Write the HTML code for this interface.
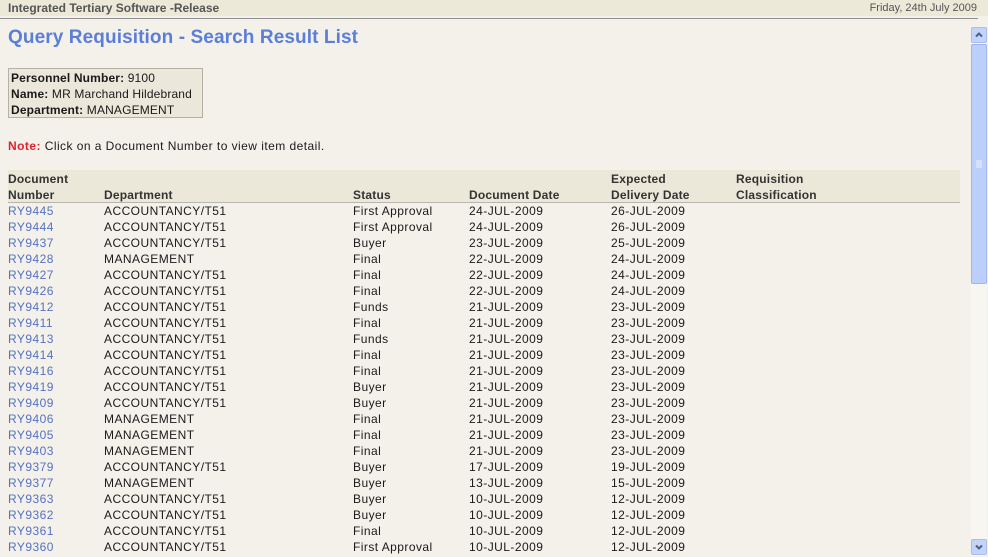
<!DOCTYPE html>
<html><head><meta charset="utf-8"><style>
html,body{margin:0;padding:0;}
body{width:988px;height:557px;background:#f3f1ea;font-family:"Liberation Sans",Arial,sans-serif;font-size:12px;color:#1a1a1a;position:relative;overflow:hidden;letter-spacing:0.45px;}
.hdr{position:absolute;left:0;top:0;width:988px;height:16px;background:#ece9d8;letter-spacing:0;}
.hdr .l{position:absolute;left:8px;top:1px;font-weight:bold;font-size:12px;color:#555;}
.hdr .r{position:absolute;right:11px;top:2px;font-size:11px;color:#555;}
.line{position:absolute;left:0;top:18px;width:978px;height:1px;background:#8f8f8f;}
h1{position:absolute;left:8px;top:27px;margin:0;font-size:19px;font-weight:bold;color:#5b7ed8;letter-spacing:0.1px;}
.info{position:absolute;left:8px;top:68px;width:195px;height:50px;background:#ebe7da;border:1px solid #b4b0a4;box-sizing:border-box;padding:1px 2px;line-height:16px;font-size:12px;white-space:nowrap;letter-spacing:0.15px;}
.note{position:absolute;left:8px;top:139px;font-size:12px;}
.note b{color:#e0202a;}
.th{position:absolute;left:8px;top:170px;width:952px;height:32px;background:#ebe7d9;border-bottom:1px solid #b9b6ad;}
.c{position:absolute;white-space:nowrap;line-height:16px;}
.h{font-weight:bold;color:#333;letter-spacing:0.2px;}
a{color:#5572c3;text-decoration:none;}
.sb{position:absolute;left:971px;top:27px;width:16px;height:529px;background:#f7f6f1;}
.btn{position:absolute;left:971px;width:16px;height:16px;background:#c3d3fb;border:1px solid #a9bdee;box-sizing:border-box;border-radius:2px;}
.thumb{position:absolute;left:971px;top:44px;width:16px;height:240px;background:#bccefa;border:1px solid #9fb5ec;box-sizing:border-box;border-radius:2px;}
</style></head><body>
<div class="hdr"><span class="l">Integrated Tertiary Software -Release</span><span class="r">Friday, 24th July 2009</span></div>
<div class="line"></div>
<h1>Query Requisition - Search Result List</h1>
<div class="info"><b>Personnel Number:</b> 9100<br><b>Name:</b> MR Marchand Hildebrand<br><b>Department:</b> MANAGEMENT</div>
<div class="note"><b>Note:</b> Click on a Document Number to view item detail.</div>
<div class="th"></div>
<div class="c h" style="left:8px;top:171px">Document<br>Number</div>
<div class="c h" style="left:104px;top:187px">Department</div>
<div class="c h" style="left:353px;top:187px">Status</div>
<div class="c h" style="left:469px;top:187px">Document Date</div>
<div class="c h" style="left:611px;top:171px">Expected<br>Delivery Date</div>
<div class="c h" style="left:736px;top:171px">Requisition<br>Classification</div>
<div class="c" style="left:8px;top:203px;"><a>RY9445</a><br><a>RY9444</a><br><a>RY9437</a><br><a>RY9428</a><br><a>RY9427</a><br><a>RY9426</a><br><a>RY9412</a><br><a>RY9411</a><br><a>RY9413</a><br><a>RY9414</a><br><a>RY9416</a><br><a>RY9419</a><br><a>RY9409</a><br><a>RY9406</a><br><a>RY9405</a><br><a>RY9403</a><br><a>RY9379</a><br><a>RY9377</a><br><a>RY9363</a><br><a>RY9362</a><br><a>RY9361</a><br><a>RY9360</a></div>
<div class="c" style="left:104px;top:203px;">ACCOUNTANCY/T51<br>ACCOUNTANCY/T51<br>ACCOUNTANCY/T51<br>MANAGEMENT<br>ACCOUNTANCY/T51<br>ACCOUNTANCY/T51<br>ACCOUNTANCY/T51<br>ACCOUNTANCY/T51<br>ACCOUNTANCY/T51<br>ACCOUNTANCY/T51<br>ACCOUNTANCY/T51<br>ACCOUNTANCY/T51<br>ACCOUNTANCY/T51<br>MANAGEMENT<br>MANAGEMENT<br>MANAGEMENT<br>ACCOUNTANCY/T51<br>MANAGEMENT<br>ACCOUNTANCY/T51<br>ACCOUNTANCY/T51<br>ACCOUNTANCY/T51<br>ACCOUNTANCY/T51</div>
<div class="c" style="left:353px;top:203px;">First Approval<br>First Approval<br>Buyer<br>Final<br>Final<br>Final<br>Funds<br>Final<br>Funds<br>Final<br>Final<br>Buyer<br>Buyer<br>Final<br>Final<br>Final<br>Buyer<br>Buyer<br>Buyer<br>Buyer<br>Final<br>First Approval</div>
<div class="c" style="left:469px;top:203px;">24-JUL-2009<br>24-JUL-2009<br>23-JUL-2009<br>22-JUL-2009<br>22-JUL-2009<br>22-JUL-2009<br>21-JUL-2009<br>21-JUL-2009<br>21-JUL-2009<br>21-JUL-2009<br>21-JUL-2009<br>21-JUL-2009<br>21-JUL-2009<br>21-JUL-2009<br>21-JUL-2009<br>21-JUL-2009<br>17-JUL-2009<br>13-JUL-2009<br>10-JUL-2009<br>10-JUL-2009<br>10-JUL-2009<br>10-JUL-2009</div>
<div class="c" style="left:611px;top:203px;">26-JUL-2009<br>26-JUL-2009<br>25-JUL-2009<br>24-JUL-2009<br>24-JUL-2009<br>24-JUL-2009<br>23-JUL-2009<br>23-JUL-2009<br>23-JUL-2009<br>23-JUL-2009<br>23-JUL-2009<br>23-JUL-2009<br>23-JUL-2009<br>23-JUL-2009<br>23-JUL-2009<br>23-JUL-2009<br>19-JUL-2009<br>15-JUL-2009<br>12-JUL-2009<br>12-JUL-2009<br>12-JUL-2009<br>12-JUL-2009</div>
<div class="sb"></div>
<div class="btn" style="top:27px"><svg width="14" height="14" viewBox="0 0 14 14"><path d="M4 8.5 L7 5.5 L10 8.5" stroke="#4d6185" stroke-width="2" fill="none"/></svg></div>
<div class="thumb"><svg width="14" height="238" viewBox="0 0 14 238"><path d="M4 116h6M4 118h6M4 120h6M4 122h6" stroke="#eef2fd" stroke-width="1"/></svg></div>
<div class="btn" style="top:539px"><svg width="14" height="14" viewBox="0 0 14 14"><path d="M4 5.5 L7 8.5 L10 5.5" stroke="#4d6185" stroke-width="2" fill="none"/></svg></div>
</body></html>
